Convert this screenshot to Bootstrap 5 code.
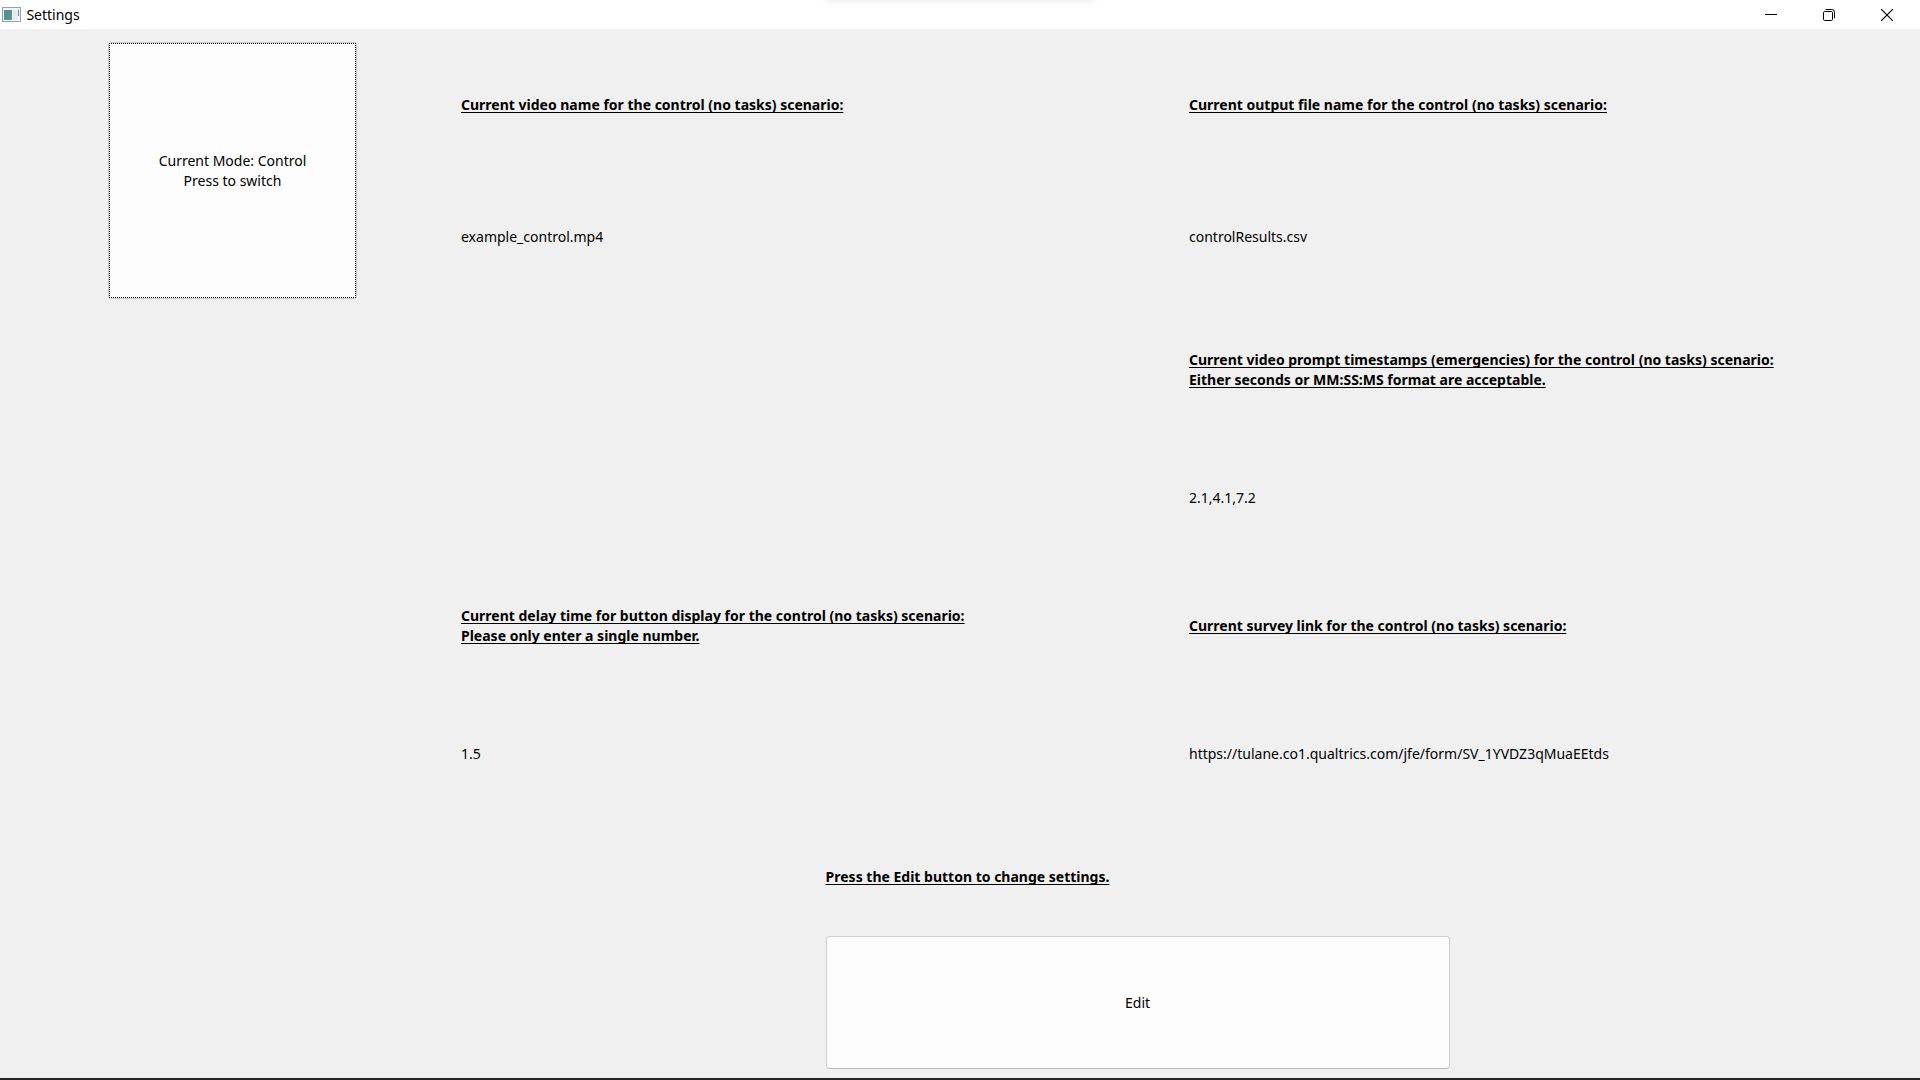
<!DOCTYPE html>
<html lang="en">
<head>
<meta charset="utf-8">
<meta name="viewport" content="width=device-width, initial-scale=1">
<title>Settings</title>
<link href="https://cdn.jsdelivr.net/npm/bootstrap@5.3.0/dist/css/bootstrap.min.css" rel="stylesheet">
<style>
  body {
    font-family: "Noto Sans", "Open Sans", sans-serif;
    font-size: 14px;
    line-height: 20px;
    color: #000;
    background: #f0f0f0;
    border-bottom: 2px solid #262626;
  }
  .title-bar {
    height: 29px;
    padding-left: 2px;
    background: #fff;
    overflow: hidden;
    position: relative;
  }
  /* soft shadow of the panel docked above the window */
  .title-bar::before {
    content: "";
    position: absolute;
    top: -10px;
    left: 50%;
    width: 270px;
    height: 10px;
    margin-left: -135px;
    box-shadow: 0 0 8px rgba(0, 0, 0, .1);
  }
  .window-name { font-size: 14px; }
  .caption-btn {
    width: 58px;
    height: 29px;
    color: #000;
    background: transparent;
    border: 0;
  }
  .caption-btn:hover { background: #e5e5e5; }
  .settings-grid {
    display: grid;
    grid-template-columns: 461fr 728fr 731fr;
    grid-template-rows: 127fr 137fr 129fr 128fr 128fr 128fr 118fr 133fr;
    padding: 12px 0 9px;
  }
  .col-mid { grid-column: 2; }
  .col-end { grid-column: 3; }
  .row-1 { grid-row: 1; }
  .row-2 { grid-row: 2; }
  .row-3 { grid-row: 3; }
  .row-4 { grid-row: 4; }
  .row-5 { grid-row: 5; }
  .row-6 { grid-row: 6; }
  .setting-label {
    font-size: 14px;
    line-height: 20px;
    font-weight: 700;
    text-decoration: underline;
    text-underline-offset: 2px;
    text-decoration-thickness: 1px;
    text-decoration-skip-ink: none;
  }
  .push-btn {
    color: #000;
    font-size: 14px;
    line-height: 20px;
    background: #fdfdfd;
    border: 1px solid #d0d0d0;
    border-bottom-color: #bababa;
    border-radius: 4px;
  }
  .push-btn:hover { background: #f7fbff; }
  .mode-cell {
    grid-column: 1;
    grid-row: 1 / span 2;
    padding: 1px 104px 6px 108px;
  }
  .mode-btn {
    padding: 0;
    border-color: #c8c8c8;
    border-radius: 3px;
  }
  .focus-frame { border: 1px dotted #000; }
  .edit-hint, .edit-cell {
    grid-column: 1 / -1;
    margin-left: 43%;
  }
  .edit-hint { grid-row: 7; }
  .edit-cell { grid-row: 8; margin-right: 24.5%; }
</style>
</head>
<body class="d-flex flex-column min-vh-100">
  <header class="title-bar d-flex align-items-center">
    <svg width="19" height="16" viewBox="0 0 19 16" aria-hidden="true">
      <defs>
        <linearGradient id="pane" x1="0" y1="0" x2="1" y2="1">
          <stop offset="0" stop-color="#5b84a6"/>
          <stop offset="1" stop-color="#4fa37c"/>
        </linearGradient>
      </defs>
      <rect x=".5" y=".5" width="18" height="14" fill="#f4f6f6" stroke="#9a9fa3"/>
      <rect x="2" y="3" width="8" height="10" fill="url(#pane)"/>
      <rect x="11" y="3" width="4" height="10" fill="#e6eaec"/>
      <rect x="16" y="3" width="1" height="6" fill="#5a8c95"/>
    </svg>
    <span class="window-name ms-1 me-auto ps-0">&#8202;Settings</span>
    <button type="button" class="caption-btn d-flex align-items-center justify-content-center p-0" aria-label="Minimize">
      <svg width="12" height="12" viewBox="0 0 12 12"><path d="M0 5.5h12" stroke="#000"/></svg>
    </button>
    <button type="button" class="caption-btn d-flex align-items-center justify-content-center p-0" aria-label="Restore">
      <svg width="12" height="12" viewBox="0 0 12 12" fill="none" stroke="#000"><rect x=".5" y="2.500" width="9" height="9" rx="1.200"/><path d="M2.800.5h6A2.700 2.700 0 0 1 11.500 3.200v6"/></svg>
    </button>
    <button type="button" class="caption-btn d-flex align-items-center justify-content-center p-0 me-1" aria-label="Close">
      <svg width="12" height="12" viewBox="0 0 12 12"><path d="M0 0l12 12M12 0L0 12" stroke="#000" stroke-width="1.200"/></svg>
    </button>
  </header>

  <main class="settings-grid flex-grow-1">
    <div class="mode-cell d-flex">
      <button type="button" class="push-btn mode-btn d-flex flex-fill">
        <span class="focus-frame d-flex flex-fill align-self-stretch align-items-center justify-content-center">Current Mode: Control<br>Press to switch</span>
      </button>
    </div>

    <h2 class="setting-label col-mid row-1 align-self-center m-0">Current video name for the control (no tasks) scenario:</h2>
    <p class="col-mid row-2 align-self-center m-0">example_control.mp4</p>

    <h2 class="setting-label col-end row-1 align-self-center m-0">Current output file name for the control (no tasks) scenario:</h2>
    <p class="col-end row-2 align-self-center m-0">controlResults.csv</p>

    <h2 class="setting-label col-end row-3 align-self-center m-0">Current video prompt timestamps (emergencies) for the control (no tasks) scenario:<br>Either seconds or MM:SS:MS format are acceptable.</h2>
    <p class="col-end row-4 align-self-center m-0">2.1,4.1,7.2</p>

    <h2 class="setting-label col-mid row-5 align-self-center m-0">Current delay time for button display for the control (no tasks) scenario:<br>Please only enter a single number.</h2>
    <p class="col-mid row-6 align-self-center m-0">1.5</p>

    <h2 class="setting-label col-end row-5 align-self-center m-0">Current survey link for the control (no tasks) scenario:</h2>
    <p class="col-end row-6 align-self-center m-0">https://tulane.co1.qualtrics.com/jfe/form/SV_1YVDZ3qMuaEEtds</p>

    <h2 class="setting-label edit-hint align-self-center mb-0">Press the Edit button to change settings.</h2>
    <div class="edit-cell d-flex">
      <button type="button" class="push-btn flex-fill">Edit</button>
    </div>
  </main>
<script src="https://cdn.jsdelivr.net/npm/bootstrap@5.3.0/dist/js/bootstrap.bundle.min.js"></script>
</body>
</html>
